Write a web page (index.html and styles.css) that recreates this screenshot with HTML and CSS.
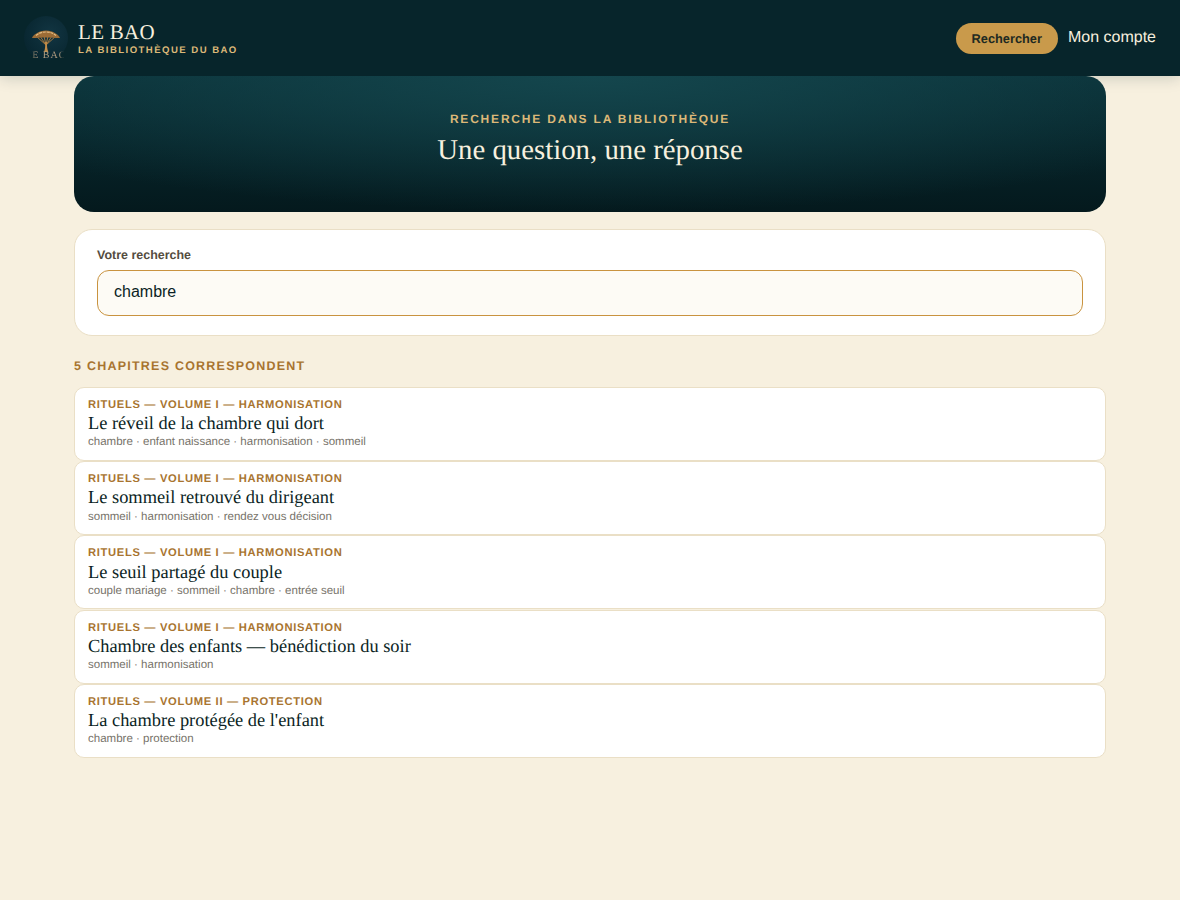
FILE: index.html
```html
<!DOCTYPE html>
<html lang="fr">
	<head>
		<meta charset="UTF-8">
		<title>Le Bao</title>
		<link rel="stylesheet" href="styles.css">
	</head>
	<body>
		<header class="topbar">
			<div class="brand">
				<div class="logo">
					<svg class="logo-tree" viewBox="0 0 30 24" width="30" height="24">
						<path d="M15 16 L5 7 M15 16 L9 7 M15 16 L13 7 M15 16 L17 7 M15 16 L21 7 M15 16 L25 7" fill="none" stroke="#b5803f" stroke-width="0.900"/>
						<path d="M14.100 13 C14.400 17 14.200 20 13 23 L17.300 23 C16.200 20 15.800 17 16 13 Z" fill="#c08c4a"/>
						<path d="M1 9 C2 6 8 1.500 15 1.500 C22 1.500 28 6 29 9 C26 9.500 24 8.200 22 8.800 C20 8 18 9 15 8.400 C12 9 10 8 8 8.800 C6 8.200 4 9.500 1 9 Z" fill="#9c6c36"/>
						<path d="M5 6.500 C8 4 11 3 15 3 C19 3 22 4 25 6.500" fill="none" stroke="#e3bd84" stroke-width="1.200" stroke-dasharray="3 0.800"/>
					</svg>
					<span class="logo-text">LE BAO</span>
				</div>
				<div class="brand-text">
					<span class="brand-name">LE BAO</span>
					<span class="brand-sub">LA BIBLIOTHÈQUE DU BAO</span>
				</div>
			</div>
			<nav class="nav">
				<a class="btn-search">Rechercher</a>
				<a class="nav-link">Mon compte</a>
			</nav>
		</header>
		<main class="page">
			<section class="hero">
				<span class="hero-kicker">RECHERCHE DANS LA BIBLIOTHÈQUE</span>
				<h1 class="hero-title">Une question, une réponse</h1>
			</section>
			<section class="search-card">
				<label class="search-label" for="q">Votre recherche</label>
				<input class="search-input" id="q" type="text" value="chambre">
			</section>
			<h2 class="results-title">5 CHAPITRES CORRESPONDENT</h2>
			<div class="results">
				<a class="result">
					<span class="result-meta">RITUELS — VOLUME I — HARMONISATION</span>
					<span class="result-title">Le réveil de la chambre qui dort</span>
					<span class="result-tags">chambre · enfant naissance · harmonisation · sommeil</span>
				</a>
				<a class="result">
					<span class="result-meta">RITUELS — VOLUME I — HARMONISATION</span>
					<span class="result-title">Le sommeil retrouvé du dirigeant</span>
					<span class="result-tags">sommeil · harmonisation · rendez vous décision</span>
				</a>
				<a class="result">
					<span class="result-meta">RITUELS — VOLUME I — HARMONISATION</span>
					<span class="result-title">Le seuil partagé du couple</span>
					<span class="result-tags">couple mariage · sommeil · chambre · entrée seuil</span>
				</a>
				<a class="result">
					<span class="result-meta">RITUELS — VOLUME I — HARMONISATION</span>
					<span class="result-title">Chambre des enfants — bénédiction du soir</span>
					<span class="result-tags">sommeil · harmonisation</span>
				</a>
				<a class="result">
					<span class="result-meta">RITUELS — VOLUME II — PROTECTION</span>
					<span class="result-title">La chambre protégée de l'enfant</span>
					<span class="result-tags">chambre · protection</span>
				</a>
			</div>
		</main>
	</body>
</html>
```
FILE: styles.css
```css
*{
	margin: 0;
	padding: 0;
	box-sizing: border-box;
}
body{
	background: #f7f0df;
	font-family: "Liberation Sans", Arial, sans-serif;
	color: #0b1f24;
	text-rendering: geometricPrecision;
}
.topbar{
	display: flex;
	align-items: center;
	justify-content: space-between;
	height: 76px;
	padding: 0 24px;
	background: #07252b;
	box-shadow: 0 2px 14px rgba(6,38,45,0.18);
}
.brand{
	display: flex;
	align-items: center;
	gap: 10px;
}
.logo{
	position: relative;
	width: 44px;
	height: 44px;
	border-radius: 50%;
	background: radial-gradient(circle at 60% 40%, #123542, #082630 75%);
}
.logo-tree{
	position: absolute;
	left: 7px;
	top: 13px;
}
.logo-text{
	position: absolute;
	left: 0;
	right: 0;
	top: 35px;
	text-align: center;
	font-family: "Liberation Serif", serif;
	font-size: 10px;
	line-height: 10px;
	letter-spacing: 1px;
	color: transparent;
	background: linear-gradient(90deg, transparent 14%, #b8a183 28%, #b8a183 80%, transparent 92%);
	-webkit-background-clip: text;
	background-clip: text;
	white-space: nowrap;
}
.brand-text{
	display: flex;
	flex-direction: column;
}
.brand-name{
	font-family: "Liberation Serif", serif;
	font-size: 21px;
	line-height: 25px;
	letter-spacing: 0.3px;
	color: #f7f0df;
}
.brand-sub{
	font-size: 9.600px;
	line-height: 11px;
	font-weight: 700;
	letter-spacing: 1.440px;
	color: #dcb878;
}
.nav{
	display: flex;
	align-items: center;
	gap: 10px;
}
.btn-search{
	display: block;
	padding: 8px 16px;
	height: 31px;
	margin-top: 1px;
	border-radius: 16px;
	background: #c99a4b;
	font-size: 12.800px;
	line-height: 15px;
	font-weight: 700;
	color: #1f2a22;
}
.nav-link{
	font-size: 16px;
	color: #f7f0df;
}
.page{
	width: 1032px;
	margin: 0 auto;
}
.hero{
	display: flex;
	flex-direction: column;
	align-items: center;
	height: 136px;
	padding-top: 36px;
	border-radius: 20px;
	background: radial-gradient(ellipse 70% 100% at 50% 0, #14464d 0, rgba(20,70,77,0) 100%), linear-gradient(180deg, #0a3037 0, #04191d 100%);
}
.hero-kicker{
	font-size: 12px;
	line-height: 14px;
	font-weight: 700;
	letter-spacing: 1.800px;
	color: #dcb878;
}
.hero-title{
	margin-top: 6px;
	font-family: "Liberation Serif", serif;
	font-size: 28.800px;
	line-height: 36px;
	font-weight: 400;
	color: #f7f0df;
}
.search-card{
	margin-top: 17px;
	height: 107px;
	padding: 18px 22px;
	border: 1px solid #eadfc6;
	border-radius: 18px;
	background: #fff;
}
.search-label{
	display: block;
	font-size: 12.480px;
	line-height: 15px;
	font-weight: 700;
	color: #544c3e;
}
.search-input{
	display: block;
	width: 100%;
	height: 46px;
	margin-top: 7px;
	padding: 0 16px 2px;
	border: 1px solid #c9933f;
	border-radius: 12px;
	background: #fdfbf5;
	font-family: "Liberation Sans", Arial, sans-serif;
	font-size: 16px;
	color: #0b1f24;
	outline: none;
}
.results-title{
	margin-top: 23px;
	font-size: 12.480px;
	line-height: 14px;
	font-weight: 700;
	letter-spacing: 1.250px;
	color: #a8742f;
}
.results{
	display: flex;
	flex-direction: column;
	gap: 0.250px;
	margin-top: 13.900px;
}
.result{
	display: flex;
	flex-direction: column;
	height: 74px;
	padding: 11px 13px;
	border: 1px solid #eadfc6;
	border-radius: 10px;
	background: #fff;
}
.result-meta{
	font-size: 11.200px;
	line-height: 13px;
	font-weight: 700;
	letter-spacing: 0.670px;
	color: #a8742f;
}
.result-title{
	margin-top: 0.300px;
	font-family: "Liberation Serif", serif;
	font-size: 18.400px;
	line-height: 23.300px;
	color: #0b1f24;
}
.result-tags{
	font-size: 11.520px;
	line-height: 14px;
	color: #77736a;
}
```
